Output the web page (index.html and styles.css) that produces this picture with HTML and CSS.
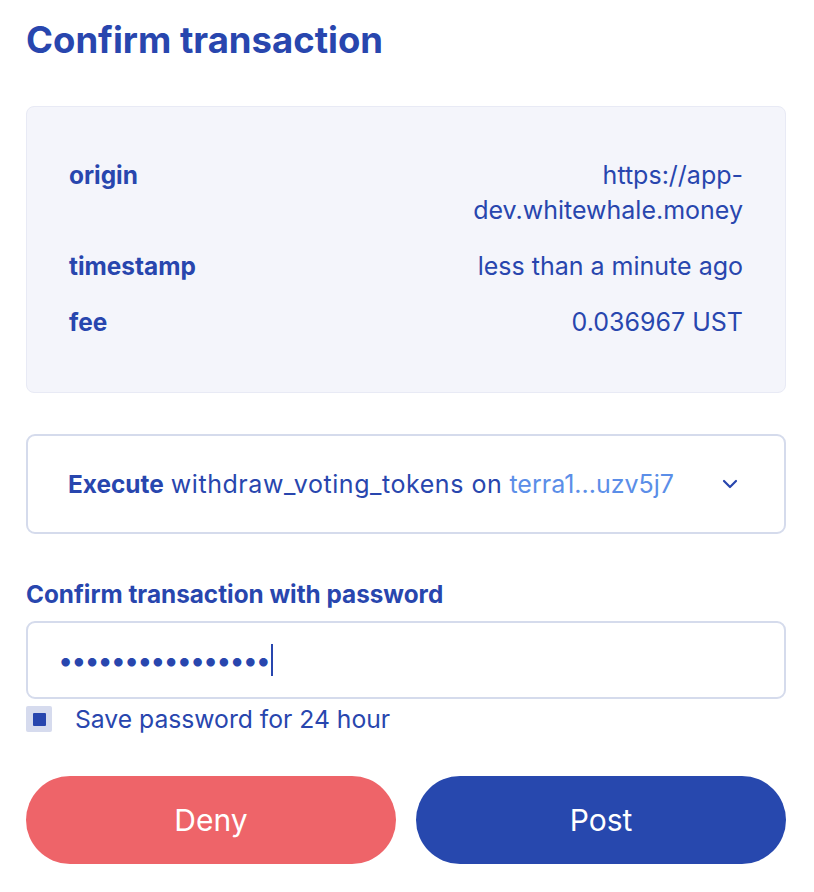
FILE: index.html
```html
<!DOCTYPE html>
<html>
<head>
<meta charset="utf-8">
<link rel="stylesheet" href="styles.css">
</head>
<body>
<div class="page">
  <h1 class="title">Confirm transaction</h1>

  <section class="details">
    <div class="row">
      <div class="label">origin</div>
      <div class="value">https://app-<br>dev.whitewhale.money</div>
    </div>
    <div class="row">
      <div class="label">timestamp</div>
      <div class="value">less than a minute ago</div>
    </div>
    <div class="row">
      <div class="label">fee</div>
      <div class="value">0.036967 UST</div>
    </div>
  </section>

  <section class="message">
    <div class="msg-text"><strong>Execute</strong> <span class="fn">withdraw_voting_tokens on</span> <span class="addr">terra1...uzv5j7</span></div>
    <svg class="chevron" width="16" height="10" viewBox="0 0 16 10"><path d="M2 2 L8 8 L14 2" fill="none" stroke="#2846ae" stroke-width="2.2" stroke-linecap="round" stroke-linejoin="round"/></svg>
  </section>

  <div class="field-label">Confirm transaction with password</div>
  <div class="input">
    <span class="dots">••••••••••••••••</span><span class="caret"></span>
  </div>
  <label class="check">
    <span class="box"><span class="inner"></span></span>
    <span class="check-text">Save password for 24 hour</span>
  </label>

  <div class="buttons">
    <button class="btn deny">Deny</button>
    <button class="btn post">Post</button>
  </div>
</div>
</body>
</html>
```

FILE: styles.css
```css
* { box-sizing: border-box; }
html, body { margin: 0; padding: 0; background: #fff; }
body {
  font-family: "Inter", "Open Sans", sans-serif;
  color: #2846ae;
}
.page {
  width: 760px;
  margin-left: 26px;
  padding-top: 18px;
}
.title {
  margin: 0;
  font-size: 36.5px;
  font-weight: 700;
  line-height: 44px;
}
.details {
  margin-top: 44px;
  background: #f4f5fb;
  border: 1px solid #e8eaf5;
  border-radius: 8px;
  padding: 51px 42px 52px 42px;
  display: flex;
  flex-direction: column;
  gap: 21px;
  font-size: 25px;
  line-height: 35px;
}
.row {
  display: flex;
  justify-content: space-between;
}
.label { font-weight: 700; font-size: 24.4px; }
.value { text-align: right; }
.message {
  margin-top: 41px;
  height: 100px;
  border: 2px solid #d5dbec;
  border-radius: 9px;
  display: flex;
  align-items: center;
  justify-content: space-between;
  padding: 0 46px 0 40px;
  font-size: 25px;
}
.msg-text strong { font-weight: 700; font-size: 24.4px; }
.fn { letter-spacing: 0.55px; }
.addr { color: #5b8ee8; }
.field-label {
  margin-top: 45px;
  font-size: 24.3px;
  font-weight: 700;
  line-height: 30px;
}
.input {
  margin-top: 12px;
  height: 78px;
  border: 2px solid #d5dbec;
  border-radius: 9px;
  display: flex;
  align-items: center;
  padding-left: 30px;
}
.dots {
  font-size: 27px;
  letter-spacing: -2px;
  color: #2846ae;
}
.caret {
  display: inline-block;
  width: 2px;
  height: 32px;
  background: #2846ae;
  margin-left: 2px;
}
.check {
  margin-top: 7px;
  display: flex;
  align-items: center;
  gap: 23px;
}
.box {
  width: 26px;
  height: 26px;
  background: #d6dbee;
  border-radius: 2px;
  display: flex;
  align-items: center;
  justify-content: center;
}
.inner {
  width: 13px;
  height: 13px;
  background: #2846ae;
  border-radius: 1px;
}
.check-text {
  font-size: 24.7px;
  line-height: 26px;
}
.buttons {
  margin-top: 44px;
  display: flex;
  gap: 20px;
}
.btn {
  flex: 1;
  height: 88px;
  border: none;
  border-radius: 44px;
  color: #fff;
  font-family: inherit;
  font-size: 30px;
  font-weight: 400;
}
.deny { background: #ee6469; }
.post { background: #2748ae; }
```
